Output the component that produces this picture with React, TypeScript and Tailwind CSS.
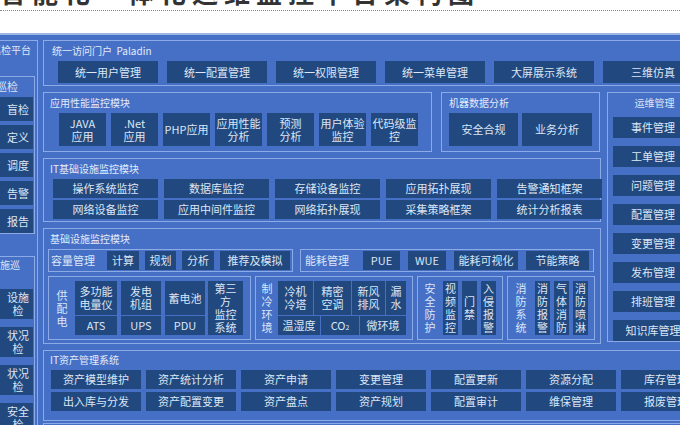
import React from "react";

const F = { fontFamily: '"Noto Sans CJK SC", "Noto Sans", sans-serif' };

function It({ c, children }: { c: string; children: React.ReactNode }) {
  return (
    <div className={"bg-[#21497f] text-[#dce6f6] flex items-center justify-center text-center leading-[13px] text-[11px] shrink-0 " + c}>
      {children}
    </div>
  );
}

function Box({ c, children }: { c: string; children: React.ReactNode }) {
  return <div className={"border border-[#8cabe6] shrink-0 " + c}>{children}</div>;
}

function Title({ children, c = "" }: { children: React.ReactNode; c?: string }) {
  return <div className={"text-[10px] text-[#e3ebfa] leading-[12px] " + c}>{children}</div>;
}

function V({ t }: { t: string }) {
  return (
    <div className="flex flex-col items-center text-[11px] leading-[13px]">
      {t.split("").map((ch, i) => (
        <span key={i}>{ch}</span>
      ))}
    </div>
  );
}

export default function App() {
  const ops = ["事件管理", "工单管理", "问题管理", "配置管理", "变更管理", "发布管理", "排班管理", "知识库管理"];
  const asset = [
    "资产模型维护", "资产统计分析", "资产申请", "变更管理", "配置更新", "资源分配", "库存管理",
    "出入库与分发", "资产配置变更", "资产盘点", "资产规划", "配置审计", "维保管理", "报废管理",
  ];
  const it = ["操作系统监控", "数据库监控", "存储设备监控", "应用拓扑展现", "告警通知框架", "网络设备监控", "应用中间件监控", "网络拓扑展现", "采集策略框架", "统计分析报表"];
  return (
    <div className="w-[680px] h-[425px] overflow-hidden bg-white relative" style={F}>
      <div className="h-[33px] relative overflow-hidden">
        <div className="text-[26px] font-bold text-[#333] leading-[26px] -mt-[21px] whitespace-nowrap tracking-[6px]">
          智能化一体化运维监控平台架构图
        </div>
        <div className="absolute left-0 right-0 top-[10px] border-t border-dotted border-[#888]" />
      </div>
      <div className="h-[392px] bg-[#4670c6] border-t-2 border-[#9db6e6] flex pt-[5px] text-[#dce6f6]">
        {/* left column */}
        <Box c="w-[46px] h-[400px] -ml-[8px] pt-[3px] flex flex-col">
          <div className="text-[10px] leading-[12px] whitespace-nowrap -ml-[2px]">巡检平台</div>
          <Box c="w-[42px] h-[158px] mt-[20px] pt-[3px] flex flex-col gap-[4px]">
            <div className="text-[11px] leading-[13px] pl-[2px]">巡检</div>
            {["盲检", "定义", "调度", "告警", "报告"].map((t) => (
              <It key={t} c="w-[39px] h-[24px] justify-end pr-[4px]">{t}</It>
            ))}
          </Box>
          <Box c="w-[42px] h-[180px] mt-[22px] pt-[2px] flex flex-col gap-[8px]">
            <div className="text-[10px] leading-[11px] -ml-[4px]">设施巡<br />检</div>
            {["设施", "状况", "状况", "安全"].map((t, i) => (
              <It key={i} c="w-[39px] h-[30px] justify-end pr-[4px]">{t}<br />检</It>
            ))}
          </Box>
        </Box>
        <div className="ml-[5px] flex flex-col gap-[6px] w-[640px] shrink-0">
          {/* Row 1 */}
          <Box c="h-[46px] pt-[4px]">
            <Title c="pl-[8px]">统一访问门户 &nbsp;Paladin</Title>
            <div className="flex gap-[9px] pl-[14px] mt-[4px]">
              {["统一用户管理", "统一配置管理", "统一权限管理", "统一菜单管理", "大屏展示系统", "三维仿真"].map((t) => (
                <It key={t} c="w-[100px] h-[22px]">{t}</It>
              ))}
            </div>
          </Box>
          <div className="flex gap-[6px]">
            <div className="flex flex-col gap-[6px] w-[558px]">
              {/* Row 2 */}
              <div className="flex gap-[9px]">
                <Box c="w-[389px] h-[60px] pt-[4px]">
                  <Title c="pl-[6px]">应用性能监控模块</Title>
                  <div className="flex gap-[5px] pl-[15px] mt-[4px]">
                    {[["JAVA", "应用"], [".Net", "应用"], ["PHP应用"], ["应用性能", "分析"], ["预测", "分析"], ["用户体验", "监控"], ["代码级监", "控"]].map((a, i) => (
                      <It key={i} c="w-[47px] h-[33px]">
                        <div>{a.map((x, j) => <div key={j}>{x}</div>)}</div>
                      </It>
                    ))}
                  </div>
                </Box>
                <Box c="w-[159px] h-[60px] pt-[4px]">
                  <Title c="pl-[7px]">机器数据分析</Title>
                  <div className="flex gap-[4px] pl-[7px] mt-[4px]">
                    <It c="w-[69px] h-[33px]">安全合规</It>
                    <It c="w-[70px] h-[33px]">业务分析</It>
                  </div>
                </Box>
              </div>
              {/* Row 3 */}
              <Box c="h-[64px] pt-[4px]">
                <Title c="pl-[6px]">IT基础设施监控模块</Title>
                <div className="grid grid-cols-[repeat(5,105px)] gap-x-[6px] gap-y-[2px] pl-[9px] mt-[4px]">
                  {it.map((t) => (
                    <It key={t} c="h-[19px]">{t}</It>
                  ))}
                </div>
              </Box>
              {/* Row 4 */}
              <Box c="h-[116px] pt-[4px] px-[4px]">
                <Title c="pl-[2px]">基础设施监控模块</Title>
                <div className="flex gap-[7px] mt-[4px]">
                  <Box c="w-[245px] h-[23px] flex items-center gap-[6px] px-[2px]">
                    <span className="text-[11px] w-[52px]">容量管理</span>
                    <It c="w-[32px] h-[19px]">计算</It>
                    <It c="w-[31px] h-[19px]">规划</It>
                    <It c="w-[32px] h-[19px]">分析</It>
                    <It c="w-[70px] h-[19px]">推荐及模拟</It>
                  </Box>
                  <Box c="w-[294px] h-[23px] flex items-center gap-[8px] px-[4px]">
                    <span className="text-[11px] w-[50px]">能耗管理</span>
                    <It c="w-[37px] h-[19px]">PUE</It>
                    <It c="w-[38px] h-[19px]">WUE</It>
                    <It c="w-[64px] h-[19px]">能耗可视化</It>
                    <It c="w-[63px] h-[19px]">节能策略</It>
                  </Box>
                </div>
                <div className="flex gap-[4px] mt-[4px]">
                  <Box c="w-[203px] h-[64px] flex items-center gap-[3px] px-[3px]">
                    <div className="w-[20px] flex justify-center"><V t="供配电" /></div>
                    <div className="flex flex-col gap-[1px]">
                      <div className="flex gap-[4px]">
                        <It c="w-[42px] h-[34px]">多功能<br />电量仪</It>
                        <It c="w-[40px] h-[34px]">发电<br />机组</It>
                        <It c="w-[40px] h-[34px]">蓄电池</It>
                      </div>
                      <div className="flex gap-[4px]">
                        <It c="w-[42px] h-[19px]">ATS</It>
                        <It c="w-[40px] h-[19px]">UPS</It>
                        <It c="w-[40px] h-[19px]">PDU</It>
                      </div>
                    </div>
                    <It c="w-[35px] h-[54px]">第三<br />方<br />监控<br />系统</It>
                  </Box>
                  <Box c="w-[158px] h-[64px] flex items-center gap-[2px] px-[2px]">
                    <div className="w-[18px] flex justify-center text-[10px]"><V t="制冷环境" /></div>
                    <div className="flex flex-col gap-[1px]">
                      <div className="flex gap-[1px]">
                        <It c="w-[35px] h-[34px]">冷机<br />冷塔</It>
                        <It c="w-[37px] h-[34px]">精密<br />空调</It>
                        <It c="w-[33px] h-[34px]">新风<br />排风</It>
                        <It c="w-[20px] h-[34px]">漏<br />水</It>
                      </div>
                      <div className="flex gap-[1px]">
                        <It c="w-[42px] h-[19px]">温湿度</It>
                        <It c="w-[38px] h-[19px]">CO<sub className="text-[7px]">2</sub></It>
                        <It c="w-[46px] h-[19px]">微环境</It>
                      </div>
                    </div>
                  </Box>
                  <Box c="w-[86px] h-[64px] flex items-center gap-[4px] px-[3px]">
                    <div className="w-[18px] flex justify-center"><V t="安全防护" /></div>
                    <It c="w-[15px] h-[54px]"><V t="视频监控" /></It>
                    <It c="w-[15px] h-[54px]"><V t="门禁" /></It>
                    <It c="w-[15px] h-[54px]"><V t="入侵报警" /></It>
                  </Box>
                  <Box c="w-[88px] h-[64px] flex items-center gap-[4px] px-[3px]">
                    <div className="w-[20px] flex justify-center"><V t="消防系统" /></div>
                    <It c="w-[15px] h-[54px]"><V t="消防报警" /></It>
                    <It c="w-[15px] h-[54px]"><V t="气体消防" /></It>
                    <It c="w-[15px] h-[54px]"><V t="消防喷淋" /></It>
                  </Box>
                </div>
              </Box>
            </div>
            {/* ops */}
            <Box c="w-[80px] h-[250px] pt-[4px] pl-[5px] flex flex-col gap-[8px]">
              <div className="text-[10px] leading-[12px] text-center pl-[10px]">运维管理</div>
              {ops.map((t) => (
                <It key={t} c="w-[80px] h-[21px]">{t}</It>
              ))}
            </Box>
          </div>
          {/* Row 5 */}
          <Box c="h-[71px] pt-[3px]">
            <Title c="pl-[6px]">IT资产管理系统</Title>
            <div className="grid grid-cols-[repeat(7,90px)] gap-x-[5px] gap-y-[3px] pl-[7px] mt-[4px]">
              {asset.map((t, i) => (
                <It key={i} c="h-[19px]">{t}</It>
              ))}
            </div>
          </Box>
          <Box c="h-[20px] -mt-[4px] pt-[1px]">
            <Title c="pl-[6px]">配置管理</Title>
          </Box>
        </div>
      </div>
    </div>
  );
}
